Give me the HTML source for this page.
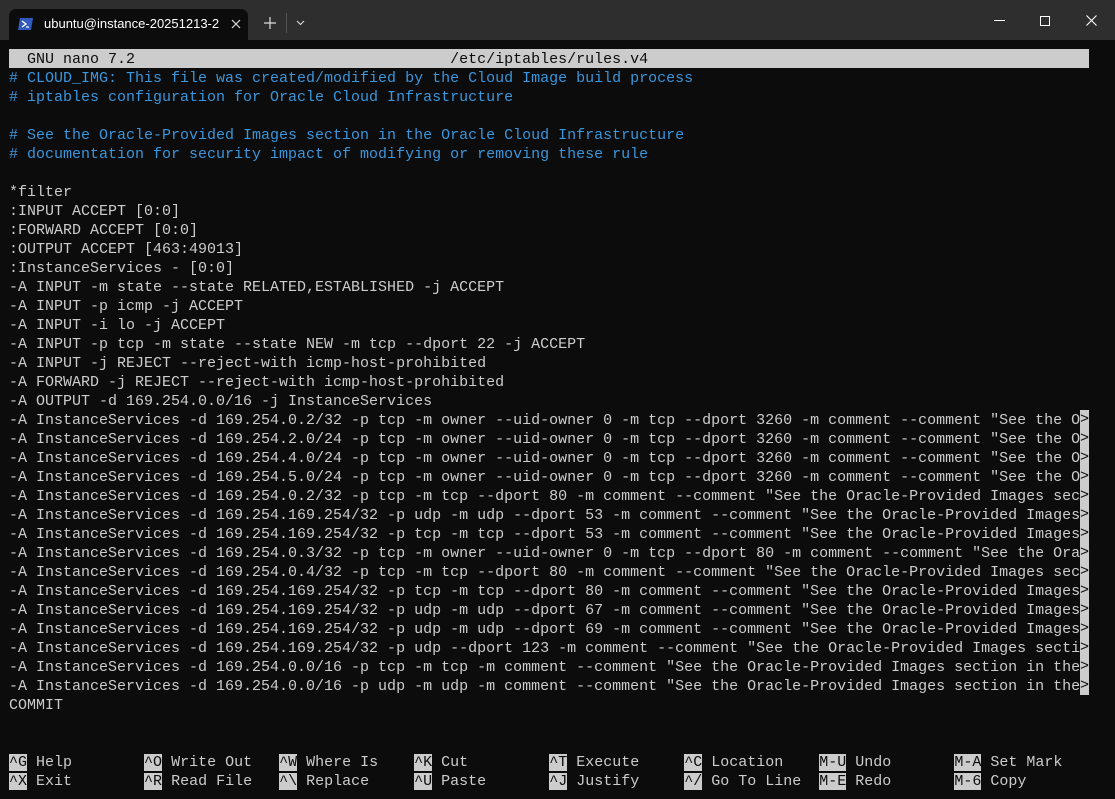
<!DOCTYPE html>
<html><head><meta charset="utf-8"><style>
body{margin:0;width:1115px;height:799px;background:#0c0c0c;overflow:hidden;position:relative;font-family:"Liberation Mono",monospace;}
#tb{position:absolute;left:0;top:0;width:1115px;height:40px;background:#2e2e2e;}
#tab{position:absolute;left:9px;top:9px;width:239px;height:31px;background:#0c0c0c;border-radius:7px 7px 0 0;}
#tab .t{position:absolute;left:35px;top:7px;color:#fff;font:13px "Liberation Sans",sans-serif;}
#term{position:absolute;left:9px;top:49px;}
.r{position:absolute;left:0;height:18px;padding-top:1px;line-height:19px;font-size:15px;color:#cccccc;white-space:pre;width:1071px;overflow:hidden;}
.c{color:#3a96dd}
.inv{background:#cccccc;color:#0c0c0c}
.gt{position:absolute;left:1071px;width:9px;height:19px;line-height:20px;font-size:15px;background:#cccccc;color:#0c0c0c;}
</style></head><body>
<div id="tb">
<div id="tab">
<svg style="position:absolute;left:9px;top:8px" width="16" height="14" viewBox="0 0 16 14"><path d="M2 1h13l-2 12H0z" fill="#2f5bbf"/><path d="M4 4l4 3-4 3" stroke="#fff" stroke-width="1.4" fill="none"/><path d="M8 10h3" stroke="#fff" stroke-width="1.2"/></svg>
<span class="t">ubuntu@instance-20251213-2</span>
<svg style="position:absolute;left:222px;top:10px" width="10" height="10"><path d="M1 1l8 8M9 1l-8 8" stroke="#ddd" stroke-width="1.2"/></svg>
</div>
<svg style="position:absolute;left:264px;top:17px" width="12" height="12"><path d="M6 0v12M0 6h12" stroke="#ddd" stroke-width="1.2"/></svg>
<div style="position:absolute;left:286px;top:13px;width:1px;height:20px;background:#555"></div>
<svg style="position:absolute;left:296px;top:20px" width="9" height="6"><path d="M1 1l3.5 3.5L8 1" stroke="#ddd" stroke-width="1.1" fill="none"/></svg>
<div style="position:absolute;left:994px;top:20px;width:11px;height:1px;background:#fff"></div>
<div style="position:absolute;left:1040px;top:16px;width:8px;height:8px;border:1px solid #fff"></div>
<svg style="position:absolute;left:1086px;top:15px" width="11" height="11"><path d="M.5 .5l10 10M10.5 .5l-10 10" stroke="#fff" stroke-width="1.1"/></svg>
</div>
<div id="term">
<div class="r inv" style="top:0;width:1080px">  GNU nano 7.2                                   /etc/iptables/rules.v4</div>
<div class="r c" style="top:19px"># CLOUD_IMG: This file was created/modified by the Cloud Image build process</div>
<div class="r c" style="top:38px"># iptables configuration for Oracle Cloud Infrastructure</div>
<div class="r c" style="top:76px"># See the Oracle-Provided Images section in the Oracle Cloud Infrastructure</div>
<div class="r c" style="top:95px"># documentation for security impact of modifying or removing these rule</div>
<div class="r" style="top:133px"><span style="border-left:1px solid #ccc;margin-left:-1px"></span>*filter</div>
<div class="r" style="top:152px">:INPUT ACCEPT [0:0]</div>
<div class="r" style="top:171px">:FORWARD ACCEPT [0:0]</div>
<div class="r" style="top:190px">:OUTPUT ACCEPT [463:49013]</div>
<div class="r" style="top:209px">:InstanceServices - [0:0]</div>
<div class="r" style="top:228px">-A INPUT -m state --state RELATED,ESTABLISHED -j ACCEPT</div>
<div class="r" style="top:247px">-A INPUT -p icmp -j ACCEPT</div>
<div class="r" style="top:266px">-A INPUT -i lo -j ACCEPT</div>
<div class="r" style="top:285px">-A INPUT -p tcp -m state --state NEW -m tcp --dport 22 -j ACCEPT</div>
<div class="r" style="top:304px">-A INPUT -j REJECT --reject-with icmp-host-prohibited</div>
<div class="r" style="top:323px">-A FORWARD -j REJECT --reject-with icmp-host-prohibited</div>
<div class="r" style="top:342px">-A OUTPUT -d 169.254.0.0/16 -j InstanceServices</div>
<div class="r" style="top:361px">-A InstanceServices -d 169.254.0.2/32 -p tcp -m owner --uid-owner 0 -m tcp --dport 3260 -m comment --comment "See the Oracle</div><div class="gt" style="top:361px">&gt;</div>
<div class="r" style="top:380px">-A InstanceServices -d 169.254.2.0/24 -p tcp -m owner --uid-owner 0 -m tcp --dport 3260 -m comment --comment "See the Oracle</div><div class="gt" style="top:380px">&gt;</div>
<div class="r" style="top:399px">-A InstanceServices -d 169.254.4.0/24 -p tcp -m owner --uid-owner 0 -m tcp --dport 3260 -m comment --comment "See the Oracle</div><div class="gt" style="top:399px">&gt;</div>
<div class="r" style="top:418px">-A InstanceServices -d 169.254.5.0/24 -p tcp -m owner --uid-owner 0 -m tcp --dport 3260 -m comment --comment "See the Oracle</div><div class="gt" style="top:418px">&gt;</div>
<div class="r" style="top:437px">-A InstanceServices -d 169.254.0.2/32 -p tcp -m tcp --dport 80 -m comment --comment "See the Oracle-Provided Images section</div><div class="gt" style="top:437px">&gt;</div>
<div class="r" style="top:456px">-A InstanceServices -d 169.254.169.254/32 -p udp -m udp --dport 53 -m comment --comment "See the Oracle-Provided Images section</div><div class="gt" style="top:456px">&gt;</div>
<div class="r" style="top:475px">-A InstanceServices -d 169.254.169.254/32 -p tcp -m tcp --dport 53 -m comment --comment "See the Oracle-Provided Images section</div><div class="gt" style="top:475px">&gt;</div>
<div class="r" style="top:494px">-A InstanceServices -d 169.254.0.3/32 -p tcp -m owner --uid-owner 0 -m tcp --dport 80 -m comment --comment "See the Oracle</div><div class="gt" style="top:494px">&gt;</div>
<div class="r" style="top:513px">-A InstanceServices -d 169.254.0.4/32 -p tcp -m tcp --dport 80 -m comment --comment "See the Oracle-Provided Images section</div><div class="gt" style="top:513px">&gt;</div>
<div class="r" style="top:532px">-A InstanceServices -d 169.254.169.254/32 -p tcp -m tcp --dport 80 -m comment --comment "See the Oracle-Provided Images section</div><div class="gt" style="top:532px">&gt;</div>
<div class="r" style="top:551px">-A InstanceServices -d 169.254.169.254/32 -p udp -m udp --dport 67 -m comment --comment "See the Oracle-Provided Images section</div><div class="gt" style="top:551px">&gt;</div>
<div class="r" style="top:570px">-A InstanceServices -d 169.254.169.254/32 -p udp -m udp --dport 69 -m comment --comment "See the Oracle-Provided Images section</div><div class="gt" style="top:570px">&gt;</div>
<div class="r" style="top:589px">-A InstanceServices -d 169.254.169.254/32 -p udp --dport 123 -m comment --comment "See the Oracle-Provided Images section</div><div class="gt" style="top:589px">&gt;</div>
<div class="r" style="top:608px">-A InstanceServices -d 169.254.0.0/16 -p tcp -m tcp -m comment --comment "See the Oracle-Provided Images section in the Oracle</div><div class="gt" style="top:608px">&gt;</div>
<div class="r" style="top:627px">-A InstanceServices -d 169.254.0.0/16 -p udp -m udp -m comment --comment "See the Oracle-Provided Images section in the Oracle</div><div class="gt" style="top:627px">&gt;</div>
<div class="r" style="top:646px">COMMIT</div>
<div class="r" style="top:703px;width:1080px"><span class="inv">^G</span> Help        <span class="inv">^O</span> Write Out   <span class="inv">^W</span> Where Is    <span class="inv">^K</span> Cut         <span class="inv">^T</span> Execute     <span class="inv">^C</span> Location    <span class="inv">M-U</span> Undo       <span class="inv">M-A</span> Set Mark</div>
<div class="r" style="top:722px;width:1080px"><span class="inv">^X</span> Exit        <span class="inv">^R</span> Read File   <span class="inv">^\</span> Replace     <span class="inv">^U</span> Paste       <span class="inv">^J</span> Justify     <span class="inv">^/</span> Go To Line  <span class="inv">M-E</span> Redo       <span class="inv">M-6</span> Copy</div>
</div>
</body></html>
